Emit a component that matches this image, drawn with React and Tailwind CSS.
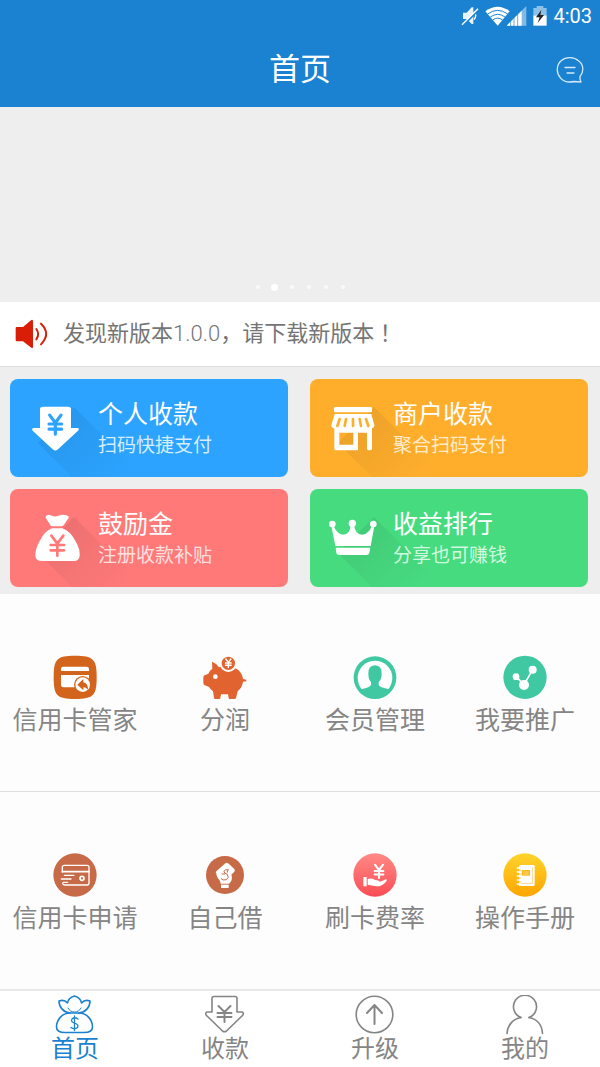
import { clsx } from "clsx";

const YEN = "M-9 -14 L0 -2 L9 -14 M0 -2 V16 M-10 0 H10 M-10 8 H10";

function Yen({ x, y, scale = 1, width = 5, color = "currentColor" }) {
  return (
    <path
      d={YEN}
      transform={`translate(${x} ${y}) scale(${scale})`}
      fill="none"
      stroke={color}
      strokeWidth={width}
      strokeLinecap="round"
      strokeLinejoin="round"
    />
  );
}

/* ---------- status bar ---------- */

function StatusBar() {
  return (
    <div className="flex h-8 items-center justify-end gap-[6px] pr-2 text-white">
      <svg className="h-5 w-[18px]" viewBox="60 18 54 60" fill="currentColor">
        <path d="M66 38 h11 l15 -16 h5 v50 h-5 l-15 -15 h-11z" opacity="0.9" />
        <path d="M99 36 q10 11 0 23" fill="none" stroke="currentColor" strokeWidth="4" />
        <path d="M66 77 L112 30" stroke="#1a82d0" strokeWidth="6" />
        <path d="M63 74 L111 26" stroke="currentColor" strokeWidth="4" />
      </svg>
      <svg className="h-5 w-[42px]" viewBox="140 16 126 60" fill="none" stroke="currentColor">
        <path d="M141 32 Q178 5 214 32 L178 75z" fill="currentColor" stroke="none" />
        <path d="M148 40 Q178 18 208 40" stroke="#1a82d0" strokeWidth="3" />
        <path d="M156 49 Q178 33 200 49" stroke="#1a82d0" strokeWidth="3" />
        <path d="M163 58 Q178 47 193 58" stroke="#1a82d0" strokeWidth="3" />
        <path d="M205 75 L264 16 V75z" fill="currentColor" stroke="none" opacity="0.45" />
        <path d="M205 75 L250 30 V75z" fill="currentColor" stroke="none" />
        <path d="M217 76 V60 M227 76 V50 M238 76 V40" stroke="#1a82d0" strokeWidth="2" />
      </svg>
      <svg className="h-5 w-[14px]" viewBox="282 16 42 60">
        <path d="M293 16 h20 v6 h10 v22 h-40 v-22 h10z" fill="#ffffff" opacity="0.5" />
        <path d="M283 44 h40 v31 h-40z" fill="#ffffff" />
        <path d="M307 28 L291 50 h11 l-6 17 L315 43 h-11z" fill="#222222" />
      </svg>
      <span className="font-['Roboto',sans-serif] text-[20px] leading-6">4:03</span>
    </div>
  );
}

function Header() {
  return (
    <header className="bg-[#1a82d0]">
      <StatusBar />
      <div className="grid grid-cols-[1fr_auto_1fr] items-center px-4">
        <h1 className="col-start-2 text-[31px] leading-[75px] text-white">首页</h1>
        <button type="button" aria-label="消息" className="justify-self-end">
          <svg className="h-7 w-7" viewBox="0 0 28 28" fill="none" stroke="#d6e9f8" strokeWidth="1.3" strokeLinecap="round" strokeLinejoin="round">
            <path d="M24 20.500 C28.300 15.500 27.500 8.500 22.800 5 C18 .8 10 .5 5.400 4.600 C.2 9 0 17 4.400 21.800 C8 26 13.500 26.500 18 25.500 L25 26 C24.300 24.500 23.800 22.500 24 20.500z" />
            <path d="M9 11.500 H19 M11 17 H18" />
          </svg>
        </button>
      </div>
    </header>
  );
}

function Banner() {
  return (
    <section className="flex h-[195px] items-end justify-center bg-[#eeeeee] pb-[11px]">
      {[0, 1, 2, 3, 4, 5].map((i) => (
        <span key={i} className="flex h-2 w-[17px] items-center justify-center">
          <span className={clsx("rounded-full", i === 1 ? "h-[7px] w-[7px] bg-white" : "h-1 w-1 bg-[#f9f9f9]")} />
        </span>
      ))}
    </section>
  );
}

function Notice() {
  return (
    <section className="flex items-center gap-[14px] border-b border-[#dcdcdc] bg-white px-[15px] py-4">
      <svg className="h-[30px] w-[34px] shrink-0" viewBox="45 60 102 90" fill="#d81e06">
        <path d="M50 84 H69 L94 63 Q99 61 99 67 V143 Q99 149 94 146 L69 127 H50 Q47 127 47 123 V88 Q47 84 50 84z" />
        <path d="M109 90 Q120 105 109 121 M123 74 Q154 104 123 136" fill="none" stroke="#d81e06" strokeWidth="6" strokeLinecap="round" />
      </svg>
      <p className="text-[22px] leading-8 text-[#757575]">
        发现新版本<span className="font-['Roboto',sans-serif] leading-none font-light">1.0.0</span>，请下载新版本
        <span className="font-['Noto_Sans_CJK_JP',sans-serif] leading-none">！</span>
      </p>
    </section>
  );
}

/* ---------- coloured cards ---------- */

const cards = [
  {
    title: "个人收款",
    subtitle: "扫码快捷支付",
    tone: "bg-[#2ba3ff] pl-[22px]",
    sub: "text-[#d5edff]",
    icon: (
      <svg className="h-[50px] w-[50px] shrink-0" viewBox="96 99 150 150">
        <path d="M128 110 H205 Q213 110 213 118 V174 H232 Q240 175 234 182 L174 238 Q166 245 158 238 L98 182 Q93 175 101 174 H120 V118 Q120 110 128 110z" fill="#ffffff" />
        <Yen x={166} y={162} scale={1.9} width={5} color="#2ba3ff" />
      </svg>
    ),
  },
  {
    title: "商户收款",
    subtitle: "聚合扫码支付",
    tone: "bg-[#ffae2c] pl-[17px]",
    sub: "text-[#ffecca]",
    icon: (
      <svg className="h-[50px] w-[50px] shrink-0" viewBox="81 99 150 150">
        <rect x="102" y="111" width="114" height="16" rx="4" fill="#ffffff" />
        <path d="M104 132 H214 L223 166 Q222 176 212 176 H106 Q95 176 94 166z" fill="#ffffff" />
        <path d="M119 147 L112 168 M138 147 L134 168 M159 147 V168 M179 147 L183 168 M198 147 L205 168" fill="none" stroke="#ffae2c" strokeWidth="8" strokeLinecap="round" />
        <path d="M103 174 H216 V236 Q216 241 210 241 Q201 241 201 236 V188 H174 V241 H108 Q103 241 103 236z M118 188 V224 H160 V188z" fill="#ffffff" fillRule="evenodd" />
      </svg>
    ),
  },
  {
    title: "鼓励金",
    subtitle: "注册收款补贴",
    tone: "bg-[#ff7979] pl-[22px]",
    sub: "text-[#ffe0e0]",
    icon: (
      <svg className="h-[50px] w-[50px] shrink-0" viewBox="96 99 150 150" fill="#ffffff">
        <path d="M139 107 Q146 101 155 107 Q162 110 170 109 Q180 105 188 104 Q202 104 206 110 Q208 113 202 119 L192 134 Q189 139 182 139 H157 Q151 139 149 132 L137 113 Q136 110 139 107z" />
        <path d="M156 145 H187 Q210 153 225 181 Q241 207 239 228 Q237 243 222 243 H123 Q107 243 106 226 Q106 206 119 183 Q135 152 156 145z" />
        <Yen x={172} y={195} scale={2} width={4} color="#ff7979" />
      </svg>
    ),
  },
  {
    title: "收益排行",
    subtitle: "分享也可赚钱",
    tone: "bg-[#47db80] pl-[17px]",
    sub: "text-[#d2f8df]",
    icon: (
      <svg className="h-[50px] w-[50px] shrink-0" viewBox="81 99 150 150" fill="#ffffff">
        <circle cx="97" cy="132" r="10" />
        <circle cx="157" cy="130" r="11" />
        <circle cx="220" cy="132" r="10" />
        <path d="M94 138 L100 136 Q111 164 129 164 Q151 163 152 135 H162 Q165 163 187 164 Q205 163 216 137 L223 139 L212 198 H106z" />
        <path d="M107 203 H211 L208 219 Q207 225 199 225 H118 Q110 225 109 219z" />
      </svg>
    ),
  },
];

function Card({ title, subtitle, tone, sub, icon, index }) {
  return (
    <button type="button" className={clsx("relative flex h-[98px] items-center gap-4 overflow-hidden rounded-lg text-left", tone)}>
      <svg className="absolute inset-0 h-full w-full" viewBox="0 0 278 98" preserveAspectRatio="xMinYMin slice">
        <defs>
          <linearGradient id={`shade-${index}`} gradientUnits="userSpaceOnUse" x1="46" y1="46" x2="106" y2="106">
            <stop offset="0" stopColor="#000000" stopOpacity="0.07" />
            <stop offset="1" stopColor="#000000" stopOpacity="0" />
          </linearGradient>
        </defs>
        <path d="M64 28 L160 124 L118 154 L28 64z" fill={`url(#shade-${index})`} />
      </svg>
      <span className="relative">{icon}</span>
      <span className="relative flex flex-col pt-0.5">
        <span className="text-[25px] leading-[34px] text-white">{title}</span>
        <span className={clsx("text-[19px] leading-7", sub)}>{subtitle}</span>
      </span>
    </button>
  );
}

/* ---------- service grid ---------- */

const services = [
  [
    {
      label: "信用卡管家",
      icon: (
        <svg className="h-11 w-11" viewBox="156 45 132 132">
          <path d="M222 47 C277 47 287 57 287 112 C287 167 277 177 222 177 C167 177 158 167 158 112 C158 57 167 47 222 47z" fill="#d2641c" />
          <path d="M186 80 H257 Q264 80 264 87 V93 H180 V87 Q180 80 186 80z M180 105 H264 V142 H187 Q180 142 180 136z" fill="#ffffff" />
          <circle cx="245" cy="134" r="26" fill="#d2641c" />
          <circle cx="245" cy="134" r="22" fill="#ffffff" />
          <path d="M229 134 L247 117 V127 Q261 130 261 149 Q255 142 247 142 V151z" fill="#d2641c" />
        </svg>
      ),
    },
    {
      label: "分润",
      icon: (
        <svg className="h-11 w-11" viewBox="606 45 132 132" fill="#e1632f">
          <path d="M633 65 Q647 70 654 82 Q672 76 690 82 Q712 85 720 100 Q725 108 726 117 L736 119 V124 L726 125 Q724 142 710 154 L705 174 Q703 178 697 178 H688 Q684 178 683 173 L681 163 H660 L658 174 Q657 178 652 178 H644 Q640 178 639 173 L636 154 Q629 149 624 141 L612 136 Q607 134 607 129 V112 Q607 106 613 105 L622 101 Q625 92 634 86z" />
          <circle cx="643" cy="110" r="7" fill="#ffffff" />
          <circle cx="682" cy="71" r="25" fill="#ffffff" />
          <circle cx="682" cy="70" r="20" />
          <Yen x={682} y={69} scale={0.85} width={5} color="#ffffff" />
        </svg>
      ),
    },
    {
      label: "会员管理",
      icon: (
        <svg className="h-11 w-11" viewBox="156 45 132 132">
          <circle cx="222" cy="113" r="64" fill="#3fc8a2" />
          <circle cx="222" cy="114" r="52" fill="#ffffff" />
          <path d="M222 76 Q243 77 242 101 Q242 118 233 126 V135 Q236 141 250 144 Q262 147 268 151 Q253 174 222 174 Q191 174 176 151 Q183 146 195 144 Q207 141 210 135 V126 Q202 118 202 101 Q201 77 222 76z" fill="#3fc8a2" />
        </svg>
      ),
    },
    {
      label: "我要推广",
      icon: (
        <svg className="h-11 w-11" viewBox="607 45 132 132" fill="#ffffff">
          <circle cx="673" cy="112" r="65" fill="#3fc8a2" />
          <path d="M646 110 L670 134 L696 89" fill="none" stroke="#ffffff" strokeWidth="5" />
          <circle cx="646" cy="110" r="10" />
          <circle cx="696" cy="89" r="12" />
          <circle cx="670" cy="135" r="15" />
        </svg>
      ),
    },
  ],
  [
    {
      label: "信用卡申请",
      icon: (
        <svg className="h-11 w-11" viewBox="156 39 132 132" fill="none" stroke="#ffffff" strokeWidth="4" strokeLinecap="round">
          <circle cx="222" cy="105" r="65" fill="#c66a48" stroke="none" />
          <path d="M184 96 V82 Q184 76 190 76 H258 Q264 76 264 82 V129 Q264 135 258 135 H192 Q186 135 185 130" />
          <path d="M184 95 H264" strokeWidth="5" />
          <path d="M190 106 H219 M181 117 H210 M186 127 H200" />
          <circle cx="243" cy="115" r="6" strokeWidth="5" />
        </svg>
      ),
    },
    {
      label: "自己借",
      icon: (
        <svg className="h-11 w-11" viewBox="606 39 132 132">
          <circle cx="672" cy="105" r="57" fill="#c66a48" />
          <path d="M673 70 Q678 66 683 71 L700 87 Q703 91 700 95 L691 104 Q697 119 684 131 H659 Q658 121 650 113 Q645 106 646 100 Q642 97 646 94z" fill="#ffffff" />
          <path d="M660 134 H683 V144 H660z" fill="#ffffff" />
          <path d="M684 90 Q670 87 669 95 Q669 100 679 103 Q686 113 676 119 Q664 123 660 115 M662 102 H672 M679 91 V98" fill="none" stroke="#c66a48" strokeWidth="3" />
        </svg>
      ),
    },
    {
      label: "刷卡费率",
      icon: (
        <svg className="h-11 w-11" viewBox="156 39 132 132" fill="#ffffff">
          <defs>
            <linearGradient id="rate" x1="0" y1="0" x2="0" y2="1">
              <stop offset="0" stopColor="#ff8a85" />
              <stop offset="1" stopColor="#fb4c55" />
            </linearGradient>
          </defs>
          <circle cx="222" cy="105" r="65" fill="url(#rate)" />
          <Yen x={234} y={93} scale={1.3} width={5} color="#ffffff" />
          <path d="M187 111 H197 V139 H187z M200 117 Q212 113 222 120 Q234 120 236 125 L245 122 L254 118 Q261 118 255 125 Q242 140 226 139 L200 134z" />
        </svg>
      ),
    },
    {
      label: "操作手册",
      icon: (
        <svg className="h-11 w-11" viewBox="607 39 132 132">
          <defs>
            <linearGradient id="manual" x1="0" y1="0" x2="0" y2="1">
              <stop offset="0" stopColor="#ffd42c" />
              <stop offset="1" stopColor="#fea500" />
            </linearGradient>
          </defs>
          <circle cx="673" cy="105" r="65" fill="url(#manual)" />
          <path d="M660 75 H698 Q702 75 702 79 V134 Q702 138 698 138 H655 V80 Q655 75 660 75z" fill="#ffffff" />
          <path d="M695 82 V130 H660" fill="none" stroke="#ffc15a" strokeWidth="2" />
          <path d="M663 90 H688 V107 H663z" fill="#ffb81a" />
          <path d="M667 96 H684 M667 102 H684" stroke="#ffe3a0" strokeWidth="2" />
          <path d="M650 84 H660 M650 96 H660 M650 108 H660 M650 120 H660 M650 132 H660" stroke="#ffffff" strokeWidth="5" strokeLinecap="round" />
          <path d="M655 90 H660 M655 102 H660 M655 114 H660 M655 126 H660" stroke="#ffbb20" strokeWidth="3" />
        </svg>
      ),
    },
  ],
];

function ServiceRow({ items }) {
  return (
    <div className="grid grid-cols-4 pt-[61px] pb-[55px]">
      {items.map((item) => (
        <a key={item.label} href="#" className="flex flex-col items-center gap-[7px]">
          {item.icon}
          <span className="text-[25px] leading-[30px] whitespace-nowrap text-[#858585]">{item.label}</span>
        </a>
      ))}
    </div>
  );
}

/* ---------- bottom tabs ---------- */

const tabs = [
  {
    label: "首页",
    active: true,
    icon: (
      <>
        <path d="M15 18 C8 17 4 12 4 6 C7 5 10 5 12.500 8 C13 4 16 2 19.500 1 C23 2 26 4 26.500 8 C29 5 32 5 35 6 C35 12 31 17 24 18" />
        <path d="M15 18 C7 18 1.500 25 1.500 32 C1.500 36 5 37.500 10 37.500 H29 C34 37.500 37.500 36 37.500 32 C37.500 25 32 18 24 18z" />
        <path d="M13 13 Q15 17 19.500 17 Q24 17 26 13" strokeWidth="1" />
        <path d="M23 24 Q19.500 21.500 17 24 Q15.500 27 19.500 28 Q24 29.500 22.500 32.500 Q19.500 35 16 32.500 M19.500 21 V35.500" strokeWidth="1.3" />
      </>
    ),
  },
  {
    label: "收款",
    icon: (
      <>
        <path d="M9 1.500 H30 Q32 1.500 32 3.500 V17 H37 Q39.500 18 37.500 20.500 L21.500 36 Q19.500 37.500 17.500 36 L1.500 20.500 Q-.2 18 2 17 H7 V3.500 Q7 1.500 9 1.500z" />
        <path d="M13.500 11 L19.500 17 L25.500 11 M19.500 17 V27 M12.500 18 H26.500 M12.500 22 H26.500" strokeWidth="2" />
      </>
    ),
  },
  {
    label: "升级",
    icon: (
      <>
        <circle cx="19.500" cy="19.500" r="18.300" />
        <path d="M12 18 L19.500 10 L27 18 M19.500 10 V29" strokeWidth="2" />
      </>
    ),
  },
  {
    label: "我的",
    icon: (
      <>
        <path d="M16 22.500 A11.500 11.500 0 1 1 24 22.500" />
        <path d="M16 22.500 C8 24 2.500 30 2 38.500 M24 22.500 C32 24 37 30 37.500 38.500" />
      </>
    ),
  },
];

function TabBar() {
  return (
    <nav className="mt-auto grid grid-cols-4 border-t-2 border-[#e8e8e8] bg-white pt-1 pb-1">
      {tabs.map((tab) => (
        <a
          key={tab.label}
          href="#"
          aria-current={tab.active ? "page" : undefined}
          className={clsx("flex flex-col items-center", tab.active ? "text-[#1a82d0]" : "text-[#858585]")}
        >
          <svg className="h-10 w-10" viewBox="0 0 40 40" fill="none" stroke="currentColor" strokeWidth="1.6" strokeLinecap="round" strokeLinejoin="round">
            {tab.icon}
          </svg>
          <span className="text-[24px] leading-7">{tab.label}</span>
        </a>
      ))}
    </nav>
  );
}

export default function App() {
  return (
    <div className="flex min-h-screen flex-col bg-[#fdfdfd] font-['Roboto','Noto_Sans_CJK_SC',sans-serif]">
      <Header />
      <Banner />
      <Notice />
      <section className="grid grid-cols-2 gap-x-[22px] gap-y-3 bg-[#eeeeee] pt-3 pr-3 pb-[7px] pl-[10px]">
        {cards.map((card, i) => (
          <Card key={card.title} index={i} {...card} />
        ))}
      </section>
      <section className="divide-y divide-[#dedede]">
        {services.map((items, i) => (
          <ServiceRow key={i} items={items} />
        ))}
      </section>
      <TabBar />
    </div>
  );
}
